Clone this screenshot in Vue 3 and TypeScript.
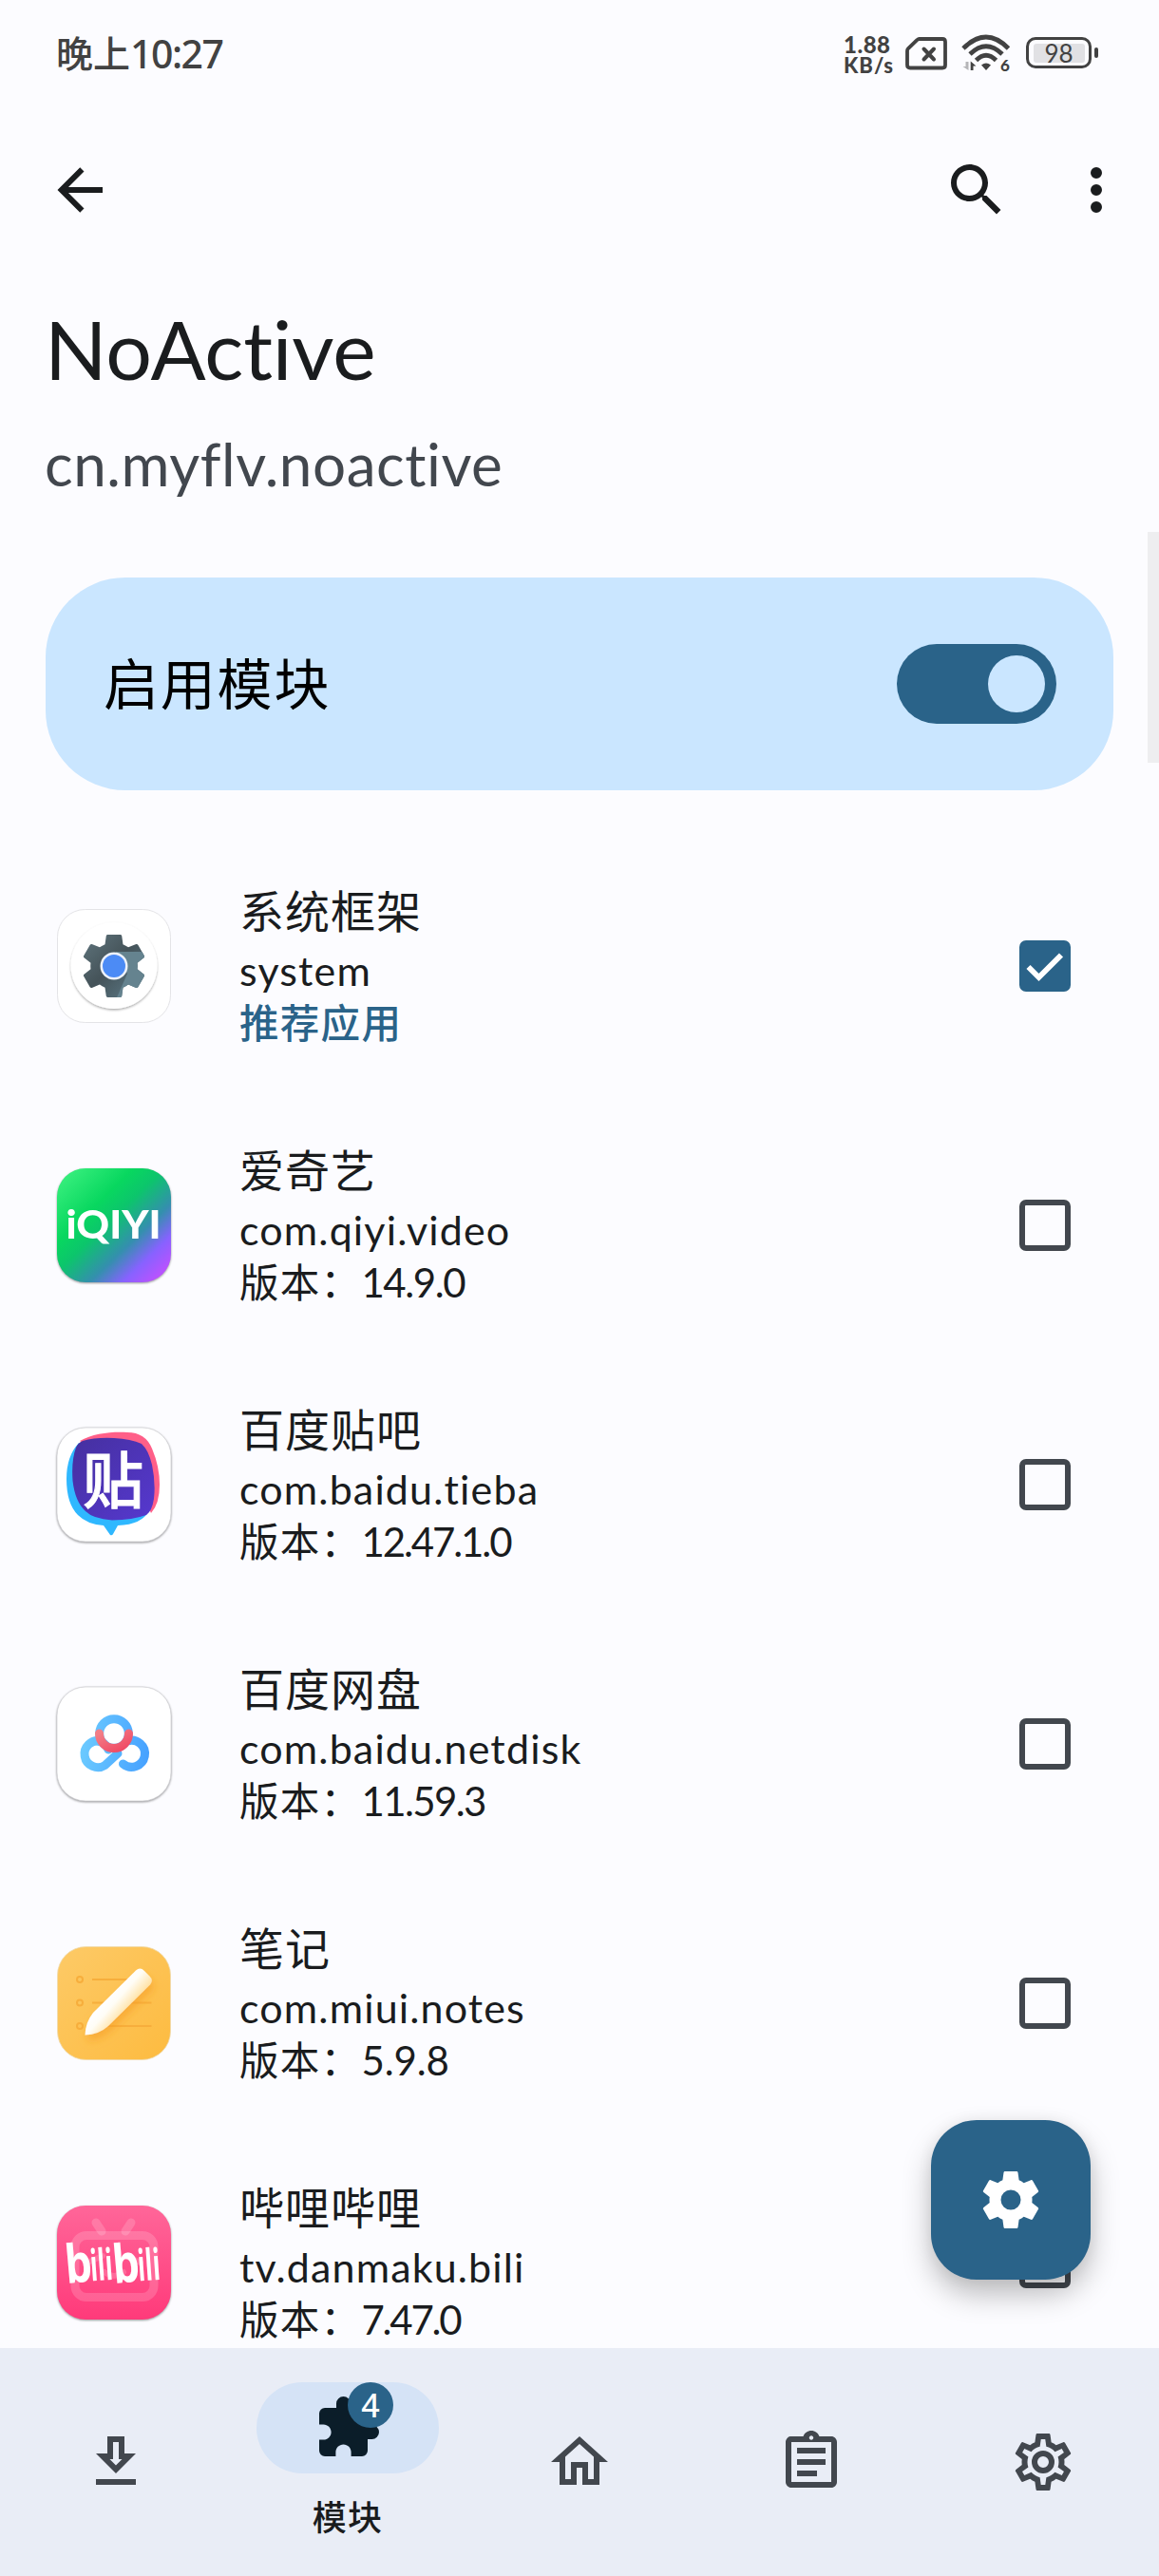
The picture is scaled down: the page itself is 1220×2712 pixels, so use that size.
<script setup lang="ts">
interface AppRow {
  icon: 'system' | 'iqiyi' | 'tieba' | 'netdisk' | 'notes' | 'bili'
  name: string
  pkg: string
  version?: string
  tracking?: number
  checked?: boolean
}

const rows: AppRow[] = [
  { icon: 'system', name: '系统框架', pkg: 'system', checked: true },
  { icon: 'iqiyi', name: '爱奇艺', pkg: 'com.qiyi.video', version: '14.9.0', tracking: -1.4 },
  { icon: 'tieba', name: '百度贴吧', pkg: 'com.baidu.tieba', version: '12.47.1.0', tracking: -2.1 },
  { icon: 'netdisk', name: '百度网盘', pkg: 'com.baidu.netdisk', version: '11.59.3', tracking: -1.6 },
  { icon: 'notes', name: '笔记', pkg: 'com.miui.notes', version: '5.9.8', tracking: -0.1 },
  { icon: 'bili', name: '哔哩哔哩', pkg: 'tv.danmaku.bili', version: '7.47.0', tracking: -2.2 },
]

const puzzle =
  'M20.5,11H19V7C19,5.89 18.1,5 17,5H13V3.5A2.5,2.5 0 0,0 10.5,1A2.5,2.5 0 0,0 8,3.5V5H4A2,2 0 0,0 2,7V10.8H3.5C5,10.8 6.2,12 6.2,13.5C6.2,15 5,16.2 3.5,16.2H2V20A2,2 0 0,0 4,22H7.8V20.5C7.8,19 9,17.8 10.5,17.8C12,17.8 13.2,19 13.2,20.5V22H17A2,2 0 0,0 19,20V16H20.5A2.5,2.5 0 0,0 23,13.5A2.5,2.5 0 0,0 20.5,11Z'
const cog =
  'M12,15.5A3.5,3.5 0 0,1 8.5,12A3.5,3.5 0 0,1 12,8.5A3.5,3.5 0 0,1 15.5,12A3.5,3.5 0 0,1 12,15.5M19.43,12.97C19.47,12.65 19.5,12.33 19.5,12C19.5,11.67 19.47,11.34 19.43,11L21.54,9.37C21.73,9.22 21.78,8.95 21.66,8.73L19.66,5.27C19.54,5.05 19.27,4.96 19.05,5.05L16.56,6.05C16.04,5.66 15.5,5.32 14.87,5.07L14.5,2.42C14.46,2.18 14.25,2 14,2H10C9.75,2 9.54,2.18 9.5,2.42L9.13,5.07C8.5,5.32 7.96,5.66 7.44,6.05L4.95,5.05C4.73,4.96 4.46,5.05 4.34,5.27L2.34,8.73C2.21,8.95 2.27,9.22 2.46,9.37L4.57,11C4.53,11.34 4.5,11.67 4.5,12C4.5,12.33 4.53,12.65 4.57,12.97L2.46,14.63C2.27,14.78 2.21,15.05 2.34,15.27L4.34,18.73C4.46,18.95 4.73,19.03 4.95,18.95L7.44,17.94C7.96,18.34 8.5,18.68 9.13,18.93L9.5,21.58C9.54,21.82 9.75,22 10,22H14C14.25,22 14.46,21.82 14.5,21.58L14.87,18.93C15.5,18.67 16.04,18.34 16.56,17.94L19.05,18.95C19.27,19.03 19.54,18.95 19.66,18.73L21.66,15.27C21.78,15.05 21.73,14.78 21.54,14.63L19.43,12.97Z'

interface NavItem {
  id: string
  path: string
  label?: string
  badge?: number
}

const nav: NavItem[] = [
  { id: 'repo', path: 'M13,5V11H14.17L12,13.17L9.83,11H11V5H13M15,3H9V9H5L12,16L19,9H15V3M19,18H5V20H19V18Z' },
  { id: 'modules', path: puzzle, label: '模块', badge: 4 },
  { id: 'home', path: 'M12 5.69L17 10.19V18H15V12H9V18H7V10.19L12 5.69M12 3L2 12H5V20H11V14H13V20H19V12H22' },
  {
    id: 'logs',
    path: 'M7 15h7v2H7zm0-4h10v2H7zm0-4h10v2H7zm12-4h-4.18C14.4 1.84 13.3 1 12 1c-1.3 0-2.4.84-2.82 2H5c-.14 0-.27.01-.4.04-.39.08-.74.28-1.01.55-.18.18-.33.4-.43.64-.1.23-.16.49-.16.77v14c0 .27.06.54.16.78s.25.45.43.64c.27.27.62.47 1.01.55.13.02.26.03.4.03h14c1.1 0 2-.9 2-2V5c0-1.1-.9-2-2-2zm-7-.25c.41 0 .75.34.75.75s-.34.75-.75.75-.75-.34-.75-.75.34-.75.75-.75zM19 19H5V5h14v14z',
  },
  {
    id: 'settings',
    path: 'M12,8A4,4 0 0,1 16,12A4,4 0 0,1 12,16A4,4 0 0,1 8,12A4,4 0 0,1 12,8M12,10A2,2 0 0,0 10,12A2,2 0 0,0 12,14A2,2 0 0,0 14,12A2,2 0 0,0 12,10M10,22C9.75,22 9.54,21.82 9.5,21.58L9.13,18.93C8.5,18.68 7.96,18.34 7.44,17.94L4.95,18.95C4.73,19.03 4.46,18.95 4.34,18.73L2.34,15.27C2.21,15.05 2.27,14.78 2.46,14.63L4.57,12.97L4.5,12L4.57,11L2.46,9.37C2.27,9.22 2.21,8.95 2.34,8.73L4.34,5.27C4.46,5.05 4.73,4.96 4.95,5.05L7.44,6.05C7.96,5.66 8.5,5.32 9.13,5.07L9.5,2.42C9.54,2.18 9.75,2 10,2H14C14.25,2 14.46,2.18 14.5,2.42L14.87,5.07C15.5,5.32 16.04,5.66 16.56,6.05L19.05,5.05C19.27,4.96 19.54,5.05 19.66,5.27L21.66,8.73C21.79,8.95 21.73,9.22 21.54,9.37L19.43,11L19.5,12L19.43,13L21.54,14.63C21.73,14.78 21.79,15.05 21.66,15.27L19.66,18.73C19.54,18.95 19.27,19.04 19.05,18.95L16.56,17.95C16.04,18.34 15.5,18.68 14.87,18.93L14.5,21.58C14.46,21.82 14.25,22 14,22H10M11.25,4L10.88,6.61C9.68,6.86 8.62,7.5 7.85,8.39L5.44,7.35L4.69,8.65L6.8,10.2C6.4,11.37 6.4,12.64 6.8,13.8L4.68,15.36L5.43,16.66L7.86,15.62C8.63,16.5 9.68,17.14 10.87,17.38L11.24,20H12.76L13.13,17.39C14.32,17.14 15.37,16.5 16.14,15.62L18.57,16.66L19.32,15.36L17.2,13.81C17.6,12.64 17.6,11.37 17.2,10.2L19.31,8.65L18.56,7.35L16.15,8.39C15.38,7.5 14.32,6.86 13.12,6.62L12.75,4H11.25Z',
  },
]
</script>

<template>
  <div class="screen">
    <div class="status">
      <div class="time"><span class="time-cjk">晚上</span><span class="time-num">10:27</span></div>
      <div class="speed">
        <span class="speed-num">1.88</span>
        <span class="speed-unit">KB/s</span>
      </div>
      <svg class="sim" width="46" height="38" viewBox="0 0 46 38" fill="none" stroke="#424242">
        <path d="M15.5 4H40Q43 4 43 7V31.500Q43 34.500 40 34.500H6Q3 34.500 3 31.500V16.500Q3 15 4 14L13.500 5Q14.500 4 15.500 4Z" stroke-width="3.800" />
        <path d="M20.500 14.500L31 25.500M31 14.500L20.500 25.500" stroke-width="4" stroke-linecap="round" />
      </svg>
      <svg class="wifi" width="52" height="40" viewBox="0 0 52 40" fill="none">
        <g stroke="#424242" stroke-width="4.800">
          <path d="M2 15Q26 -9 49.500 15" />
          <path d="M9 21Q26 4.500 43 21" />
          <path d="M15.500 27.500Q26 17 36.500 27.500" />
        </g>
        <path d="M21 32.500Q26 28.500 31 32.500L26 38Z" fill="#424242" />
        <path d="M7.500 29V38L1.500 34H4.500V29Z" fill="#b5b5b8" />
        <path d="M9.700 38V28.500L15.500 33.500H12.500V38Z" fill="#424242" />
        <text x="41" y="38.500" font-family="Lato, sans-serif" font-weight="900" font-size="17" fill="#424242">6</text>
      </svg>
      <div class="battery">
        <div class="cell"><div class="charge">98</div></div>
        <div class="nub"></div>
      </div>
    </div>

    <header class="toolbar">
      <svg class="ic back" viewBox="0 0 24 24"><path d="M20,11V13H8L13.500,18.500L12.080,19.920L4.160,12L12.080,4.080L13.500,5.500L8,11H20Z" /></svg>
      <svg class="ic search" viewBox="0 0 24 24"><path d="M15.500 14h-.79l-.28-.27C15.410 12.590 16 11.110 16 9.500 16 5.910 13.090 3 9.500 3S3 5.910 3 9.500 5.910 16 9.500 16c1.610 0 3.090-.59 4.230-1.570l.27.28v.79l5 4.990L20.490 19l-4.990-5zm-6 0C7.010 14 5 11.990 5 9.500S7.010 5 9.500 5 14 7.010 14 9.500 11.990 14 9.500 14z" /></svg>
      <svg class="ic more" viewBox="0 0 24 24"><path d="M12 8a2 2 0 1 0 0-4 2 2 0 0 0 0 4zm0 2a2 2 0 1 0 0 4 2 2 0 0 0 0-4zm0 6a2 2 0 1 0 0 4 2 2 0 0 0 0-4z" /></svg>
    </header>

    <h1 class="title">NoActive</h1>
    <p class="subtitle">cn.myflv.noactive</p>

    <section class="enable">
      <span class="enable-label">启用模块</span>
      <span class="switch"><span class="thumb"></span></span>
    </section>
    <div class="scrollbar"></div>

    <main class="list">
      <div v-for="row in rows" :key="row.pkg" class="row">
        <div class="app-icon">
          <svg v-if="row.icon === 'system'" class="tile" viewBox="0 0 128 128">
            <defs>
              <linearGradient id="sysGear" x1="0" y1="0" x2="1" y2="1">
                <stop offset="0" stop-color="#5f757d" />
                <stop offset=".48" stop-color="#455359" />
                <stop offset=".6" stop-color="#4a5d65" />
                <stop offset="1" stop-color="#607d8b" />
              </linearGradient>
              <clipPath id="gearClip">
                <path transform="translate(24.400 24.400) scale(3.300)" :d="cog" />
              </clipPath>
              <filter id="discShadow" x="-20%" y="-20%" width="140%" height="140%">
                <feDropShadow dx="0" dy="1.500" stdDeviation="1.200" flood-color="#000" flood-opacity=".32" />
              </filter>
            </defs>
            <rect x="4.500" y="4.500" width="119" height="119" rx="29" fill="#fff" stroke="#e4e4e7" />
            <circle cx="64" cy="63.500" r="45.500" fill="#fff" filter="url(#discShadow)" />
            <path transform="translate(24.400 24.400) scale(3.300)" :d="cog" fill="url(#sysGear)" />
            <path clip-path="url(#gearClip)" d="M66 49H104V104H64L78 72Z" fill="#65838f" />
            <circle cx="64" cy="64" r="14.500" fill="#eef2fa" />
            <circle cx="64" cy="64" r="12" fill="#4c8bf5" />
          </svg>
          <svg v-else-if="row.icon === 'iqiyi'" class="tile shade" viewBox="0 0 128 128">
            <defs>
              <linearGradient id="iq" x1=".08" y1=".05" x2=".95" y2=".95">
                <stop offset="0" stop-color="#36ee7c" />
                <stop offset=".3" stop-color="#08d75f" />
                <stop offset=".45" stop-color="#0cc56c" />
                <stop offset=".66" stop-color="#348fae" />
                <stop offset=".82" stop-color="#8762ff" />
                <stop offset="1" stop-color="#c44fff" />
              </linearGradient>
            </defs>
            <rect x="4" y="4" width="120" height="120" rx="30" fill="url(#iq)" />
            <text x="13.500" y="78" font-family="Lato, sans-serif" font-weight="900" font-size="41" fill="#fff" textLength="100" lengthAdjust="spacingAndGlyphs">iQIYI</text>
          </svg>
          <svg v-else-if="row.icon === 'tieba'" class="tile shade" viewBox="0 0 128 128">
            <defs>
              <linearGradient id="tb" x1="0" y1="0" x2="1" y2="1">
                <stop offset="0" stop-color="#45309f" />
                <stop offset="1" stop-color="#5638cf" />
              </linearGradient>
            </defs>
            <rect x="4" y="4" width="120" height="120" rx="30" fill="#fff" stroke="#cfcfd2" stroke-width=".7" />
            <path d="M28 18C42 10 62 8 78 9Q97 9 104 26Q112 45 112 64Q112 84 103 94L88 60Z" fill="#ff5f88" />
            <path d="M27 20Q14 34 14 58Q14 84 26 96Q36 106 53 107L60 117Q62 118 63 116L68 107Q94 106 101 91L60 60Z" fill="#2fb8ff" />
            <path d="M31 18Q45 14 64 15Q82 16 93 21Q100 27 104 43Q108 62 106 79Q104 92 98 96Q84 101 62 101.500Q42 100 34 92Q23 82 20.500 60Q19 38 24 25Q26 20 31 18Z" fill="url(#tb)" />
            <text x="31" y="83" font-family="'Noto Sans CJK SC', sans-serif" font-weight="500" font-size="64" fill="#fff" stroke="#fff" stroke-width="1">贴</text>
          </svg>
          <svg v-else-if="row.icon === 'netdisk'" class="tile shade" viewBox="0 0 128 128">
            <defs>
              <linearGradient id="nd" gradientUnits="userSpaceOnUse" x1="25" y1="70" x2="102" y2="80">
                <stop offset="0" stop-color="#6dccff" />
                <stop offset="1" stop-color="#45a0ff" />
              </linearGradient>
              <linearGradient id="nr" x1="0" y1="0" x2="1" y2="1">
                <stop offset="0" stop-color="#f27e87" />
                <stop offset="1" stop-color="#f04863" />
              </linearGradient>
            </defs>
            <rect x="4" y="4" width="120" height="120" rx="30" fill="#fff" stroke="#cfcfd2" stroke-width=".7" />
            <g fill="none" stroke="url(#nd)" stroke-width="9" stroke-linecap="round">
              <circle cx="64" cy="53" r="15.300" />
              <path d="M68 74L54.500 86.500A14 14 0 1 1 50 61" />
              <path d="M78 61A14 14 0 1 1 73.500 85" />
              <path d="M47 61A14 14 0 0 1 58 70" />
            </g>
            <path d="M48.500 53A15.500 15.500 0 0 0 79.500 53" fill="none" stroke="url(#nr)" stroke-width="9" stroke-linecap="round" />
          </svg>
          <svg v-else-if="row.icon === 'notes'" class="tile" viewBox="0 0 128 128">
            <defs>
              <linearGradient id="nt" x1="0" y1="0" x2="1" y2="1">
                <stop offset="0" stop-color="#fdca67" />
                <stop offset="1" stop-color="#fdbb40" />
              </linearGradient>
              <linearGradient id="pen" gradientUnits="userSpaceOnUse" x1="60" y1="56" x2="78" y2="72">
                <stop offset="0" stop-color="#fff" />
                <stop offset=".35" stop-color="#fffdf6" />
                <stop offset="1" stop-color="#ffe2a4" />
              </linearGradient>
              <filter id="penShadow" x="-30%" y="-30%" width="160%" height="160%">
                <feDropShadow dx="2" dy="6" stdDeviation="4" flood-color="#f59a1c" flood-opacity=".55" />
              </filter>
            </defs>
            <rect x="4.500" y="4.500" width="119" height="119" rx="30" fill="url(#nt)" stroke="#efd9ab" stroke-width=".8" />
            <g fill="none" stroke="#f7ae3c" stroke-width="2">
              <circle cx="28" cy="39" r="3" /><circle cx="28" cy="63.500" r="3" /><circle cx="28" cy="88" r="3" />
              <path d="M41 39H80M41 63.500H103.500M56 88H103.500" />
            </g>
            <path d="M33.500 97.500Q34 84 42 74L87 29.500Q91.500 25.500 96 30L101.500 35.500Q106 40 102 44.500L58 88Q48 97 33.500 97.500Z" fill="url(#pen)" filter="url(#penShadow)" />
          </svg>
          <svg v-else class="tile shade" viewBox="0 0 128 128">
            <defs>
              <linearGradient id="bl" x1="0" y1="0" x2="0" y2="1">
                <stop offset="0" stop-color="#ff6699" />
                <stop offset="1" stop-color="#ff3a7a" />
              </linearGradient>
            </defs>
            <rect x="4" y="4" width="120" height="120" rx="30" fill="url(#bl)" />
            <g fill="none" stroke="#fff" stroke-opacity=".17" stroke-linecap="round">
              <path d="M45 22L51 31M82 22L76 31" stroke-width="9" />
              <rect x="23" y="35.500" width="83" height="65" rx="12" stroke-width="9" />
              <path d="M36 64L52 57M76 57L92 64M54 74Q64 82 74 74" stroke-width="6" />
            </g>
            <g font-family="'Open Sans', sans-serif" font-weight="700" fill="#fff">
              <text transform="translate(14 86) rotate(-5) scale(.8 1)" font-size="56">b</text>
              <text transform="translate(40 83.500) rotate(-4) scale(.56 1)" font-size="46">ili</text>
              <text transform="translate(64 86) rotate(-5) scale(.8 1)" font-size="56">b</text>
              <text transform="translate(90 83.500) rotate(-4) scale(.56 1)" font-size="46">ili</text>
            </g>
          </svg>
        </div>
        <div class="info">
          <div class="name">{{ row.name }}</div>
          <div class="pkg">{{ row.pkg }}</div>
          <div v-if="row.version" class="version">版本：<span class="num" :style="{ letterSpacing: row.tracking + 'px' }">{{ row.version }}</span></div>
          <div v-else class="recommended">推荐应用</div>
        </div>
        <div class="check" :class="{ on: row.checked }">
          <svg v-if="row.checked" viewBox="0 0 54 54"><path d="M9.500 28L20.500 39L44 15.500" fill="none" stroke="#fff" stroke-width="5.800" /></svg>
        </div>
      </div>
    </main>

    <div class="fab">
      <svg class="ic" viewBox="0 0 24 24"><path :d="cog" /></svg>
    </div>

    <nav class="bottom">
      <div v-for="item in nav" :key="item.id" class="tab" :class="{ active: item.label }">
        <div class="pill">
          <svg class="ic" viewBox="0 0 24 24"><path :d="item.path" /></svg>
          <span v-if="item.badge" class="badge">{{ item.badge }}</span>
        </div>
        <span v-if="item.label" class="tab-label">{{ item.label }}</span>
      </div>
    </nav>
  </div>
</template>

<style>
body {
  background: #fcfcff;
}
</style>

<style scoped>
.screen {
  position: relative;
  display: flex;
  flex-direction: column;
  width: 1220px;
  height: 2712px;
  overflow: hidden;
  background: #fcfcff;
  color: #1a1c1e;
  font-family: Lato, 'Noto Sans CJK SC', sans-serif;
  font-variant-ligatures: none;
}
.status {
  display: flex;
  flex: none;
  height: 112px;
  padding-left: 59px;
  color: #424242;
}
.time {
  display: flex;
  width: 829px;
  height: 112px;
  align-items: flex-start;
  font-weight: 500;
  line-height: 56px;
  white-space: nowrap;
}
.time-cjk {
  font-family: 'Noto Sans CJK SC', sans-serif;
  font-size: 39px;
  padding-top: 26px;
}
.time-num {
  font-family: 'Noto Sans', sans-serif;
  font-size: 41px;
  letter-spacing: -1.5px;
  padding-top: 28px;
}
.speed {
  display: flex;
  flex-direction: column;
  width: 62px;
  padding-top: 36px;
  font-weight: 900;
  line-height: 22px;
}
.speed-num {
  font-size: 24px;
  letter-spacing: 0.5px;
}
.speed-unit {
  font-size: 22px;
  letter-spacing: 1px;
}
.sim {
  margin: 37px 0 0 2px;
}
.wifi {
  margin: 36px 0 0 14px;
}
.battery {
  display: flex;
  align-items: center;
  gap: 3px;
  height: 33px;
  margin: 39px 0 0 16px;
}
.cell {
  box-sizing: border-box;
  width: 69px;
  height: 33px;
  padding: 3.500px 4.500px;
  border: 3px solid #424242;
  border-radius: 10px;
}
.charge {
  height: 20px;
  border-radius: 3px;
  background: #e1e1e4;
  font-size: 26px;
  line-height: 20px;
  text-align: center;
}
.nub {
  width: 4px;
  height: 11px;
  border-radius: 2px;
  background: #424242;
}
.toolbar {
  display: flex;
  flex: none;
  height: 176px;
  padding: 52px 30px 0 48px;
  box-sizing: border-box;
}
.ic {
  display: block;
  width: 72px;
  height: 72px;
  fill: currentColor;
}
.search {
  margin-left: auto;
  margin-right: 54px;
}
.title {
  flex: none;
  height: 140px;
  margin: 0 0 0 47px;
  font-size: 86px;
  font-weight: 400;
  line-height: 158px;
  letter-spacing: -0.2px;
}
.subtitle {
  flex: none;
  height: 180px;
  margin: 0 0 0 47px;
  color: #42474e;
  font-size: 62px;
  line-height: 121px;
  letter-spacing: 0.55px;
}
.enable {
  display: flex;
  flex: none;
  align-items: center;
  justify-content: space-between;
  box-sizing: border-box;
  height: 224px;
  margin: 0 48px;
  padding: 0 60px 0 61px;
  border-radius: 84px;
  background: #cae6ff;
}
.enable-label {
  margin-bottom: 6px;
  color: #000;
  font-family: 'Noto Sans CJK SC', sans-serif;
  font-size: 58px;
  line-height: 84px;
  letter-spacing: 1.8px;
}
.switch {
  display: flex;
  justify-content: flex-end;
  box-sizing: border-box;
  width: 168px;
  height: 84px;
  padding: 12px;
  border-radius: 42px;
  background: #2a6389;
}
.thumb {
  width: 60px;
  height: 60px;
  border-radius: 50%;
  background: #cae6ff;
}
.scrollbar {
  position: absolute;
  top: 560px;
  right: 0;
  width: 12px;
  height: 243px;
  background: #eeeef0;
}
.list {
  flex: 1;
  min-height: 0;
  padding-top: 49px;
  overflow: hidden;
}
.row {
  display: flex;
  align-items: flex-start;
  box-sizing: border-box;
  height: 273px;
  padding: 43px 93px 0 60px;
}
.app-icon {
  width: 120px;
  height: 120px;
  margin-top: 33px;
}
.tile {
  display: block;
  width: 128px;
  height: 128px;
  margin: -4px;
  overflow: visible;
}
.shade {
  filter: drop-shadow(0 1.500px 1.200px rgba(0, 0, 0, 0.4));
}
.info {
  flex: 1;
  margin-left: 72px;
  white-space: nowrap;
}
.name {
  height: 69px;
  font-family: 'Noto Sans CJK SC', sans-serif;
  font-size: 47px;
  line-height: 66px;
  letter-spacing: 1px;
}
.pkg {
  height: 54px;
  font-size: 43px;
  line-height: 57px;
  letter-spacing: 1.15px;
}
.version,
.recommended {
  height: 56px;
  font-family: 'Noto Sans CJK SC', sans-serif;
  font-size: 41.5px;
  line-height: 56px;
  letter-spacing: 1.3px;
}
.num {
  font-family: Lato, sans-serif;
  font-size: 42px;
}
.recommended {
  color: #2a6389;
  font-weight: 500;
}
.check {
  box-sizing: border-box;
  width: 54px;
  height: 54px;
  margin-top: 66px;
  border: 6px solid #42474e;
  border-radius: 7px;
}
.check.on {
  border: 0;
  background: #2a6389;
}
.check svg {
  display: block;
}
.fab {
  position: absolute;
  top: 2232px;
  left: 980px;
  display: flex;
  align-items: center;
  justify-content: center;
  width: 168px;
  height: 168px;
  border-radius: 48px;
  background: #2a6389;
  color: #fff;
  box-shadow: 0 16px 30px rgba(0, 0, 0, 0.25), 0 0 16px rgba(0, 0, 0, 0.06);
}
.bottom {
  position: relative;
  display: flex;
  flex: none;
  height: 240px;
  background: #e9edf6;
}
.tab {
  display: flex;
  flex: 1;
  flex-direction: column;
  align-items: center;
  padding-top: 72px;
  color: #42474e;
}
.tab .ic {
  flex: none;
}
.tab:not(.active) .pill {
  height: 96px;
  align-items: flex-start;
  padding-top: 12px;
  box-sizing: border-box;
}
.tab.active {
  padding-top: 36px;
  color: #0b1d29;
}
.pill {
  position: relative;
  display: flex;
  align-items: center;
  justify-content: center;
  width: 192px;
  height: 96px;
  border-radius: 48px;
}
.active .pill {
  background: #d5e3f6;
}
.badge {
  position: absolute;
  top: 0;
  left: 96px;
  width: 48px;
  height: 48px;
  border-radius: 50%;
  background: #2a6389;
  color: #fff;
  font-family: 'Noto Sans', sans-serif;
  font-size: 34px;
  font-weight: 500;
  line-height: 48px;
  text-align: center;
}
.tab-label {
  margin-top: 18px;
  color: #1a1c1e;
  font-family: 'Noto Sans CJK SC', sans-serif;
  font-size: 36px;
  font-weight: 500;
  line-height: 52px;
  letter-spacing: 1.200px;
}
</style>
